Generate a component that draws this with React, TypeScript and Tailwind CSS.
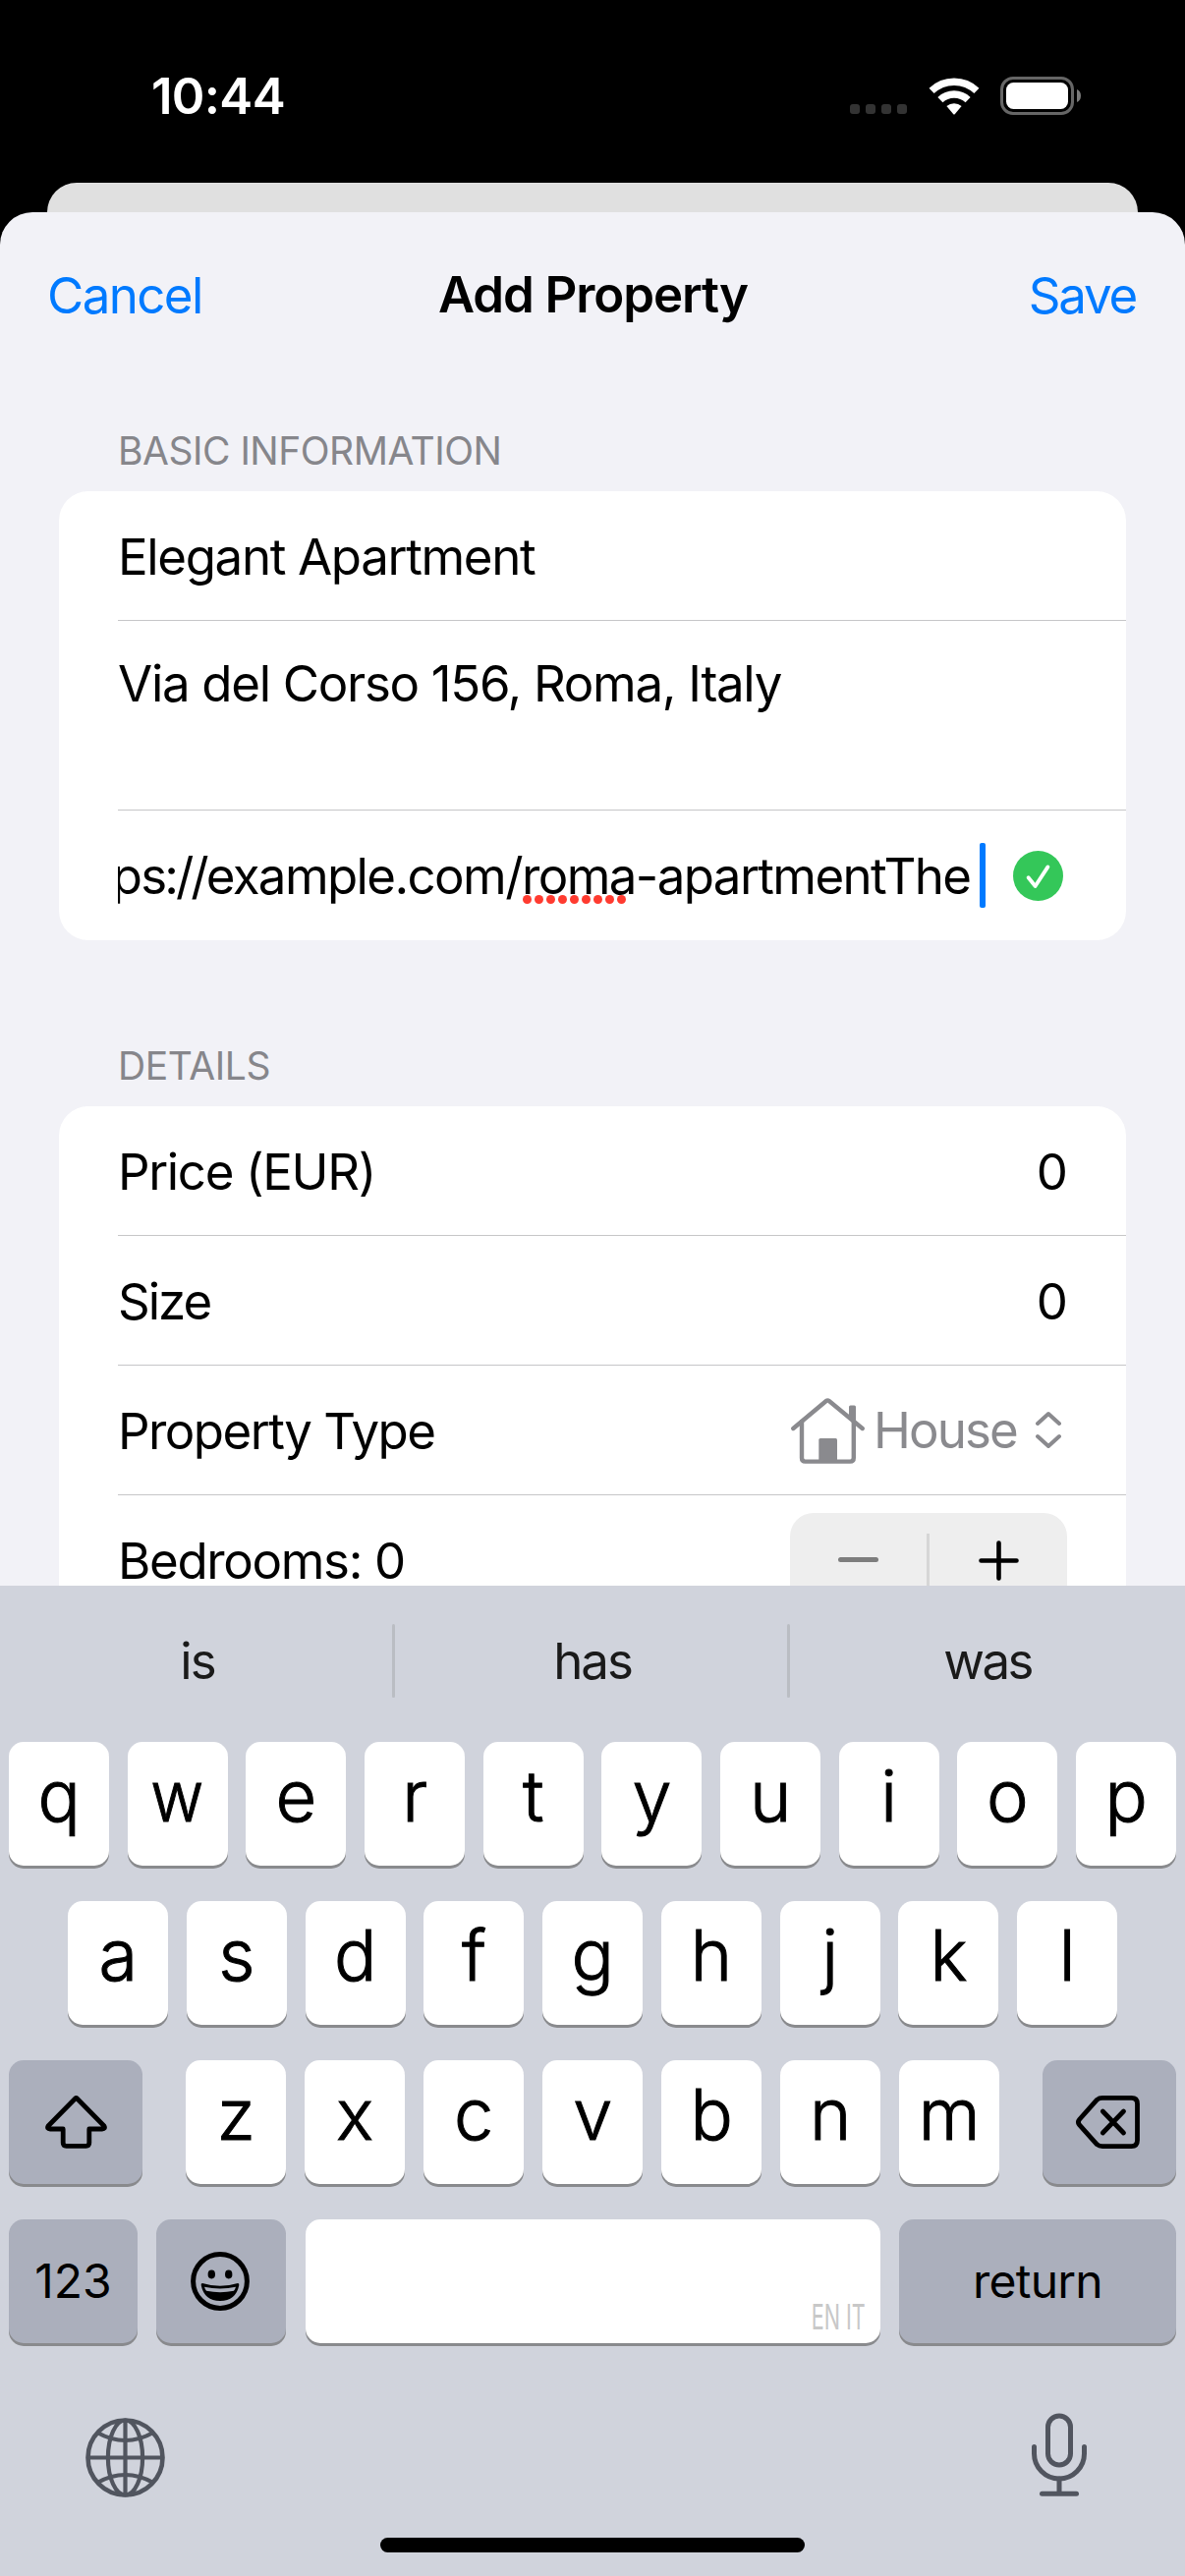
import type { ReactNode } from "react";

function WifiIcon() {
  return (
    <svg className="h-[38px] w-[52px]" viewBox="-26 -37.5 52 38" fill="none">
      <path d="M-22.9 -24.1A33.2 33.2 0 0 1 22.9 -24.1" stroke="#fff" strokeWidth="7.4" />
      <path d="M-14.1 -14.9A20.5 20.5 0 0 1 14.1 -14.9" stroke="#fff" strokeWidth="7.4" />
      <path d="M-7.6 -8.4A11.4 11.4 0 0 1 7.6 -8.4L0.7 -0.3Q0 0.4 -0.7 -0.3Z" fill="#fff" />
    </svg>
  );
}

function BatteryIcon() {
  return (
    <svg className="h-[39px] w-[82px]" viewBox="0 0 82 39" fill="none">
      <rect x="1.5" y="1.5" width="72" height="36" rx="11.5" stroke="#666" strokeWidth="3" />
      <rect x="6" y="6" width="63" height="27" rx="7.5" fill="#fff" />
      <path d="M78 13Q82 14.8 82 19.5T78 26Z" fill="#7a7a7a" />
    </svg>
  );
}

function CheckBadge() {
  return (
    <svg className="h-[51px] w-[51px]" viewBox="0 0 51 51" fill="none">
      <circle cx="25.5" cy="25.5" r="25.5" fill="#34c759" />
      <path d="M15.6 27.2L22.6 36L35.4 16.4" stroke="#fff" strokeWidth="3.8" strokeLinecap="round" strokeLinejoin="round" />
    </svg>
  );
}

function HouseIcon() {
  return (
    <svg className="h-[68px] w-[76px]" viewBox="15 21 76 68" fill="none" stroke="#8a8a8e" strokeWidth="4.4" strokeLinecap="round" strokeLinejoin="round">
      <path d="M17.3 53L50.8 25Q52.3 23.8 53.8 25L87.7 53" />
      <path d="M26 46V83Q26 86.6 29.6 86.6H75.2Q78.8 86.6 78.8 83V46" />
      <path d="M43.3 87V64.5Q43.3 63 44.8 63H60.5Q62 63 62 64.5V87Z" fill="#8a8a8e" stroke="none" />
      <path d="M74 43V31Q74 29.5 75.5 29.5H79.5Q81 29.5 81 31V49Z" fill="#8a8a8e" stroke="none" />
    </svg>
  );
}

function UpDownIcon() {
  return (
    <svg className="h-[39px] w-[26px]" viewBox="0 0 26 39" fill="none" stroke="#8a8a8e" strokeWidth="4" strokeLinecap="round" strokeLinejoin="round">
      <path d="M2 13L13 3L24 13" />
      <path d="M2 26L13 36L24 26" />
    </svg>
  );
}

function ShiftIcon() {
  return (
    <svg className="h-[54px] w-[63px]" viewBox="0 0 63 54" fill="none" stroke="#000" strokeWidth="4.8" strokeLinejoin="round">
      <path d="M30.3 3.2Q31.5 2 32.7 3.2L60 31Q61.5 34 58 34H44.8V48Q44.8 51.3 41.5 51.3H21.5Q18.2 51.3 18.2 48V34H5Q1.5 34 3 31Z" />
    </svg>
  );
}

function DeleteIcon() {
  return (
    <svg className="mr-[3px] h-[54px] w-[65px]" viewBox="0 0 65 54" fill="none" stroke="#000" strokeWidth="4.8" strokeLinejoin="round" strokeLinecap="round">
      <path d="M21.5 4.2Q23.6 2.4 27 2.4H56.5Q62.5 2.4 62.5 8.4V45.6Q62.5 51.6 56.5 51.6H27Q23.6 51.6 21.5 49.8L3.6 29.8Q1.2 27 3.6 24.2Z" />
      <path d="M27.3 16L48.5 38M48.5 16L27.3 38" />
    </svg>
  );
}

function EmojiIcon() {
  return (
    <svg className="mr-[2px] h-[60px] w-[60px]" viewBox="-30 -30 60 60" fill="none">
      <circle r="27.4" stroke="#000" strokeWidth="5" />
      <ellipse cx="-8.7" cy="-7" rx="3.7" ry="4.4" fill="#000" />
      <ellipse cx="8.7" cy="-7" rx="3.7" ry="4.4" fill="#000" />
      <path d="M-18 2Q0 7.6 18 2Q19.6 2 19.3 4Q16 20 0 20T-19.3 4Q-19.6 2 -18 2Z" fill="#000" />
      <path d="M-16 5.8Q0 9.4 16 5.8Q15.4 8 14 9.8Q0 12.6 -14 9.8Q-15.4 8 -16 5.8Z" fill="#abafbc" />
    </svg>
  );
}

function GlobeIcon() {
  return (
    <svg className="h-[81px] w-[81px]" viewBox="-40.5 -40.5 81 81" fill="none" stroke="#51555f" strokeWidth="4.2">
      <circle r="38" strokeWidth="4.6" />
      <ellipse rx="17.6" ry="38" />
      <path d="M0 -38V38M-38 0H38" />
      <path d="M-28.5 -25.5Q0 -9.5 28.5 -25.5M-28.5 25.5Q0 9.5 28.5 25.5" />
    </svg>
  );
}

function MicIcon() {
  return (
    <svg className="h-[87px] w-[58px]" viewBox="0 0 58 87" fill="none" stroke="#51555f" strokeWidth="5" strokeLinecap="round">
      <rect x="17.5" y="4" width="23" height="50" rx="11.5" />
      <path d="M3.5 35.5V42.5A25.5 25.5 0 0 0 54.5 42.5V35.5" />
      <path d="M29 68V82" />
      <path d="M11.5 83.2H46.5" />
    </svg>
  );
}

function Divider() {
  return <div className="ml-[60px] h-px shrink-0 bg-[#c6c6c8]" />;
}

function Row({ label, children }: { label: ReactNode; children?: ReactNode }) {
  return (
    <div className="flex h-[131px] shrink-0 items-center justify-between pl-[60px]">
      <div className="pt-[2px] leading-[62px]">{label}</div>
      {children}
    </div>
  );
}

function LetterKey({ letter }: { letter: string }) {
  return (
    <div className="h-[126px] w-[102px] rounded-[15px] bg-white pr-[1px] text-center text-[72px] leading-[110px] font-light shadow-[0_3px_0_#898a8d] [-webkit-text-stroke:1px_#000]">
      {letter === "w" ? <span className="inline-block scale-x-[0.92]">w</span> : letter}
    </div>
  );
}

function DarkKey({ size, children }: { size: string; children: ReactNode }) {
  return (
    <div className={`flex h-[126px] items-center justify-center rounded-[15px] bg-[#abafbc] text-[48px] shadow-[0_3px_0_#898a8d] ${size}`}>
      {children}
    </div>
  );
}

function StatusBar() {
  return (
    <div className="flex h-[186px] shrink-0 items-start justify-between pt-[66px] pr-[106px] pl-[154px] text-white">
      <div className="text-[51px] leading-[63px] font-semibold tracking-[-0.7px]">10:44</div>
      <div className="flex h-[63px] items-center gap-[21.5px]">
        <div className="mt-[27px] flex gap-[6px]">
          {[0, 1, 2, 3].map((dot) => (
            <div key={dot} className="h-[10px] w-[10px] rounded-[3px] bg-[#333]" />
          ))}
        </div>
        <WifiIcon />
        <BatteryIcon />
      </div>
    </div>
  );
}

function Keyboard() {
  return (
    <div className="flex h-[1008px] shrink-0 flex-col bg-[#d0d3dc]">
      <div className="flex h-[153px] shrink-0 items-center text-center tracking-[-2px] text-[#1a1a1a]">
        <div className="w-[399px] pt-[2px] pl-[3px]">is</div>
        <div className="h-[75px] w-[3px] rounded-full bg-[#babdc3]" />
        <div className="w-[399px] pt-[2px] pl-[3px]">has</div>
        <div className="h-[75px] w-[3px] rounded-full bg-[#babdc3]" />
        <div className="w-[402px] pt-[2px] tracking-[-2.6px]">was</div>
      </div>
      <div className="flex flex-col gap-[36px] px-[9px] pt-[6px]">
        <div className="flex justify-between">
          {"qwertyuiop".split("").map((letter) => (
            <LetterKey key={letter} letter={letter} />
          ))}
        </div>
        <div className="flex justify-between px-[60px]">
          {"asdfghjkl".split("").map((letter) => (
            <LetterKey key={letter} letter={letter} />
          ))}
        </div>
        <div className="flex justify-between">
          <DarkKey size="w-[136px]">
            <ShiftIcon />
          </DarkKey>
          <div className="flex w-[828px] justify-between">
            {"zxcvbnm".split("").map((letter) => (
              <LetterKey key={letter} letter={letter} />
            ))}
          </div>
          <DarkKey size="w-[136px]">
            <DeleteIcon />
          </DarkKey>
        </div>
        <div className="flex justify-between">
          <DarkKey size="w-[131px]">
            <span className="tracking-normal">123</span>
          </DarkKey>
          <DarkKey size="w-[132px]">
            <EmojiIcon />
          </DarkKey>
          <div className="flex h-[126px] w-[585px] items-end justify-end rounded-[15px] bg-white pr-[15px] pb-[9px] shadow-[0_3px_0_#898a8d]">
            <span className="origin-right scale-x-[0.6] text-[36px] leading-[36px] tracking-normal text-[#c8c8c8]">EN IT</span>
          </div>
          <DarkKey size="w-[282px]">
            <span className="tracking-[-0.8px]">return</span>
          </DarkKey>
        </div>
      </div>
      <div className="flex justify-between pt-[70px] pr-[99px] pl-[87px]">
        <div className="pt-[6px]">
          <GlobeIcon />
        </div>
        <MicIcon />
      </div>
      <div className="mx-auto mt-[41px] h-[15px] w-[432px] rounded-full bg-black" />
    </div>
  );
}

export default function App() {
  return (
    <div className="flex h-[2622px] w-[1206px] flex-col overflow-hidden bg-black font-['Inter',sans-serif] text-[51px] tracking-[-1.35px] text-black">
      <StatusBar />
      <div className="mx-[48px] h-[30px] shrink-0 rounded-t-[30px] bg-[#e0e0e0]" />
      <div className="flex h-[1398px] shrink-0 flex-col overflow-hidden rounded-t-[33px] bg-[#f2f2f7]">
        <div className="grid h-[170px] shrink-0 grid-cols-3 items-center pr-[50px] pl-[48px] leading-[62px]">
          <div className="tracking-[-1.6px] text-[#007aff]">Cancel</div>
          <div className="pb-[2px] pl-[3px] text-center font-semibold whitespace-nowrap tracking-[-1.1px]">Add Property</div>
          <div className="text-right tracking-[-2.2px] text-[#007aff]">Save</div>
        </div>

        <div className="mt-[48px] h-[66px] shrink-0 pl-[120px] text-[39px] leading-[49px] tracking-[-0.5px] text-[#86868b]">BASIC INFORMATION</div>
        <div className="mx-[60px] flex h-[457px] shrink-0 flex-col rounded-[30px] bg-white">
          <Row label="Elegant Apartment" />
          <Divider />
          <div className="h-[192px] shrink-0 pt-[32px] pl-[60px] leading-[63px] tracking-[-1.3px]">Via del Corso 156, Roma, Italy</div>
          <Divider />
          <div className="flex h-[132px] items-center justify-between pr-[64px] pl-[60px]">
            <div className="flex w-[883px] items-center justify-end gap-[9.5px] overflow-hidden">
              <div className="pt-[1px] leading-[66px] tracking-[-1.6px] whitespace-nowrap">
                p<span className="tracking-[-3px]">s://</span>example.com/
                <span className="relative">
                  roma
                  <span className="absolute bottom-[2px] left-[1px] flex gap-[3px]">
                    {[0, 1, 2, 3, 4, 5, 6, 7, 8].map((dot) => (
                      <span key={dot} className="block h-[9px] w-[9px] rounded-full bg-[#ff3b30]" />
                    ))}
                  </span>
                </span>
                -apartmentThe
              </div>
              <div className="h-[66px] w-[6px] shrink-0 rounded-[2px] bg-[#007aff]" />
            </div>
            <CheckBadge />
          </div>
        </div>

        <div className="mt-[103px] h-[66px] shrink-0 pl-[120px] text-[39px] leading-[49px] tracking-[-0.4px] text-[#86868b]">DETAILS</div>
        <div className="mx-[60px] flex h-[620px] shrink-0 flex-col rounded-t-[30px] bg-white">
          <Row label="Price (EUR)">
            <div className="pt-[2px] pr-[59px] leading-[62px] tracking-normal">0</div>
          </Row>
          <Divider />
          <Row label={<span className="tracking-[-2px]">Size</span>}>
            <div className="pt-[2px] pr-[59px] leading-[62px] tracking-normal">0</div>
          </Row>
          <Divider />
          <Row label={<span className="tracking-[-1.55px]">Property Type</span>}>
            <div className="flex items-center pr-[66px] text-[#8a8a8e]">
              <HouseIcon />
              <span className="pl-[8px] leading-[62px] tracking-[-1.85px]">House</span>
              <span className="pl-[19px]">
                <UpDownIcon />
              </span>
            </div>
          </Row>
          <Divider />
          <Row label="Bedrooms: 0">
            <div className="mr-[60px] flex h-[96px] w-[282px] items-center rounded-[24px] bg-[#eeeeee]">
              <div className="flex w-[139px] justify-center">
                <div className="h-[5px] w-[41px] rounded-full bg-[#7d7d7d]" />
              </div>
              <div className="h-[54px] w-[3px] bg-[#d6d6d6]" />
              <div className="flex w-[140px] justify-center">
                <svg className="mt-[2px] h-[41px] w-[41px]" viewBox="0 0 41 41" stroke="#000" strokeWidth="4.6" strokeLinecap="round">
                  <path d="M20.5 2.5V38.5M2.5 20.5H38.5" />
                </svg>
              </div>
            </div>
          </Row>
        </div>
      </div>
      <Keyboard />
    </div>
  );
}
